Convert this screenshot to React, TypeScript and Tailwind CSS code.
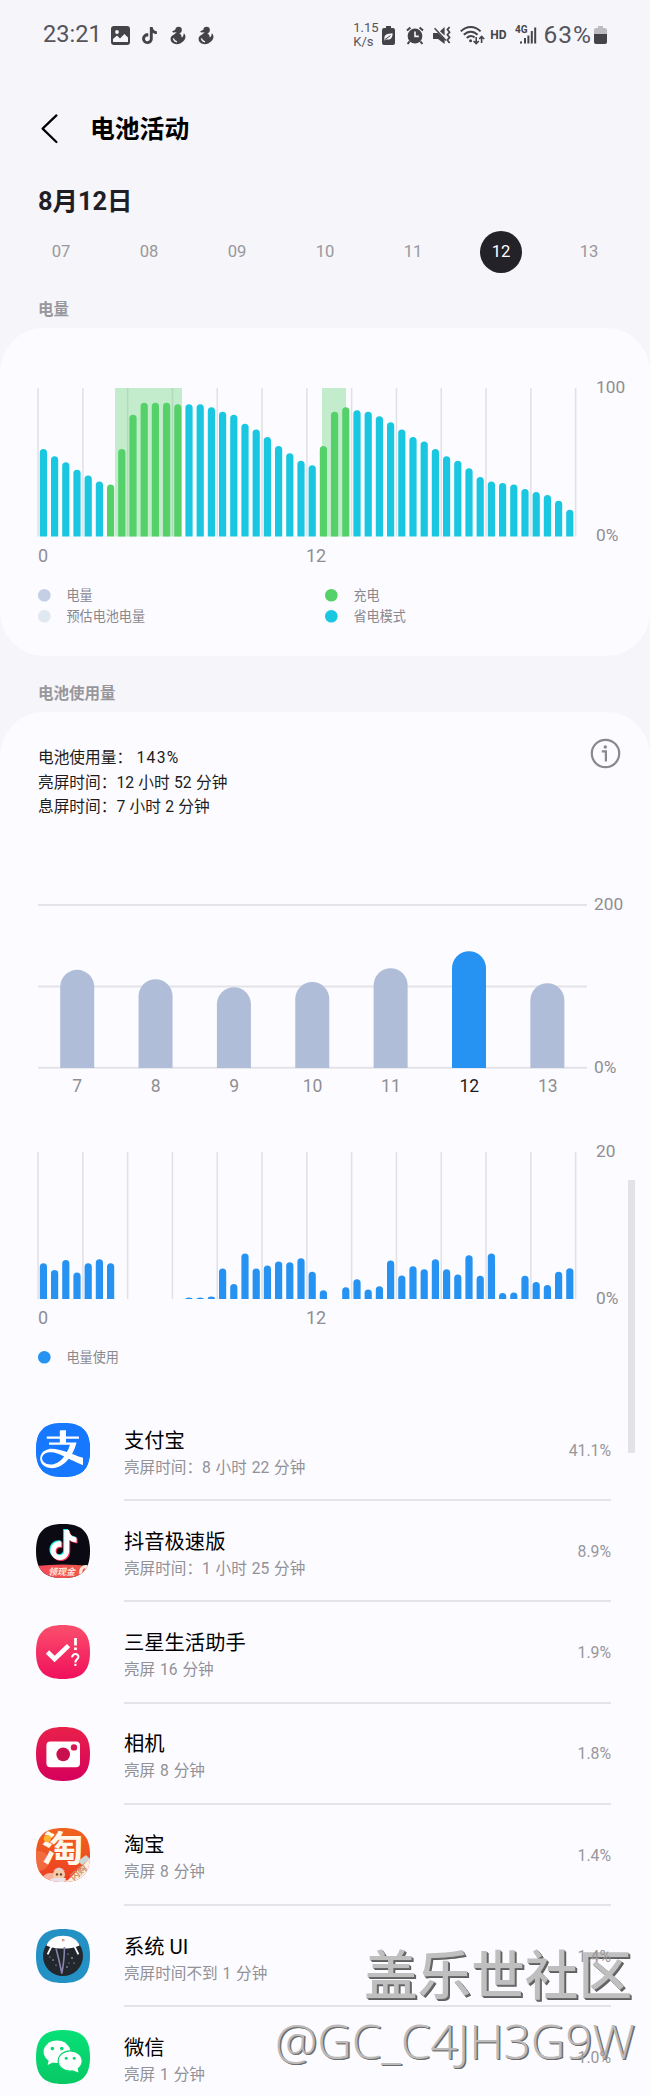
import type { ReactNode } from 'react'
import { SiAlipay, SiTiktok } from 'react-icons/si'

const CYAN = '#19c8e0'
const GREEN = '#55d169'
const BLUE = '#2693f3'

const DAYS = ['07', '08', '09', '10', '11', '12', '13']

// Battery level for every half hour of the day
const LEVELS = [
  59, 54, 50, 45, 41, 37, 35, 59, 82, 90, 90, 90, 89, 89, 89, 87, 84, 82, 76, 72, 67, 61, 56, 51,
  48, 61, 84, 87, 85, 84, 81, 77, 72, 67, 64, 59, 54, 51, 46, 40, 37, 36, 35, 32, 30, 28, 24, 18,
]

const isCharging = (i: number) => (i >= 6 && i <= 12) || (i >= 25 && i <= 27)

const USAGE = [
  4.85, 3.95, 5.3, 3.6, 4.85, 5.4, 4.85, 0, 0, 0, 0, 0, 0, 0.22, 0.22, 0.33, 4.15, 2.05, 6.2, 4.15, 4.55,
  5.1, 5, 5.55, 3.7, 1.2, 0, 1.6, 2.7, 1.3, 1.75, 5.25, 3.2, 4.45, 4.05, 5.4, 4.05, 3.35, 5.95, 3.15,
  6.2, 0.8, 0.9, 3.15, 2.3, 1.9, 3.7, 4.2,
]

const WEEK = [
  { day: '7', value: 120.5 },
  { day: '8', value: 109 },
  { day: '9', value: 99.2 },
  { day: '10', value: 105.7 },
  { day: '11', value: 122.5 },
  { day: '12', value: 143.4 },
  { day: '13', value: 104 },
]

const SQUIRCLE = 'M27 0C46 0 54 8 54 27S46 54 27 54 0 46 0 27 8 0 27 0Z'

function barPath(x: number, width: number, height: number, bottom: number) {
  const r = width / 2
  const ry = Math.min(r, height)
  const top = bottom - height
  return `M${x} ${bottom}V${top + ry}A${r} ${ry} 0 0 1 ${x + width} ${top + ry}V${bottom}Z`
}

interface DayChartProps {
  values: number[]
  max: number
  height: number
  color: (i: number) => string
  bands?: { x: number; width: number }[]
}

function DayChart({ values, max, height, color, bands = [] }: DayChartProps) {
  return (
    <svg width="540" height={height} className="block shrink-0 overflow-visible">
      {Array.from({ length: 13 }, (_, i) => (
        <rect key={i} x={i * 44.8 - 0.7} y="0" width="1.5" height={height} fill="#e0e0e5" />
      ))}
      {bands.map((b) => (
        <rect key={b.x} x={b.x} y="0" width={b.width} height={height} fill="#55d169" fillOpacity="0.34" />
      ))}
      {values.map((v, i) =>
        v > 0 ? <path key={i} d={barPath(i * 11.2 + 1.8, 7.2, (v / max) * height, height)} fill={color(i)} /> : null
      )}
    </svg>
  )
}

function AxisLabels({ top, bottom }: { top: string; bottom: string }) {
  return (
    <div className="-mt-[13px] -mb-[11px] flex flex-col justify-between text-[17.3px] leading-6 text-[#8e8e93]">
      <span>{top}</span>
      <span>{bottom}</span>
    </div>
  )
}

function HourLabels() {
  return (
    <div className="flex h-6 pl-[38px] text-[18px] leading-6 text-[#8e8e93]">
      <span className="w-[268px]">0</span>
      <span>12</span>
    </div>
  )
}

function LegendItem({ color, label }: { color: string; label: string }) {
  return (
    <div className="flex h-[21px] w-[287px] items-center">
      <svg width="13" height="13" className="mr-[15.5px]">
        <circle cx="6.3" cy="6.3" r="6.3" fill={color} />
      </svg>
      <span className="pt-px text-[13.1px] leading-5 text-[#88888d]">{label}</span>
    </div>
  )
}

function DuckIcon() {
  return (
    <svg width="16" height="19" viewBox="0 0 16 19" fill="#444347">
      <circle cx="8.6" cy="4" r="3.2" />
      <path d="M6 3.6 2.2 5.2 3 6.6 7 6.2Z" />
      <path d="M5.5 7.2C9 5.6 12 8.6 11.6 11.6 13 11 13.6 9.6 13.8 7.2 16.4 9.4 15.8 13.4 13 15.6 10.4 18.6 5 19 2.2 16.6.2 14.8 0 11.6 2 9.8 3 8.8 4.4 8.6 5.5 7.2Z" />
      <path d="M3.4 12.4C3.8 14.4 5 15.6 7 15.8" fill="none" stroke="#f6f5fa" strokeWidth="1.3" />
    </svg>
  )
}

function StatusBar() {
  return (
    <div className="flex h-[70px] items-center pl-[43px] pr-[43px] text-[#444347]">
      <span className="text-[23.6px] leading-none text-[#55545a]">23:21</span>
      <svg width="19" height="19" viewBox="0 0 19 19" className="ml-[9px]">
        <rect width="19" height="19" rx="3" fill="#444347" />
        <circle cx="6" cy="6" r="1.9" fill="#f6f5fa" />
        <path d="M2 16V13L6 9.6 9 12.4 13.4 8 17 11.4V16Z" fill="#f6f5fa" />
      </svg>
      <SiTiktok size={17} className="ml-[11px]" />
      <div className="ml-[12px] flex gap-3">
        <DuckIcon />
        <DuckIcon />
      </div>

      <div className="ml-auto flex items-center">
        <div className="w-[29px] text-[13px] leading-[14.5px] text-[#55545a]">
          <div>1.15</div>
          <div>K/s</div>
        </div>
        {/* Power saving */}
        <svg width="13" height="19" viewBox="0 0 13 19" className="mr-[11px]">
          <path d="M4 0H9V2H11Q13 2 13 4V17Q13 19 11 19H2Q0 19 0 17V4Q0 2 2 2H4Z" fill="#444347" />
          <path d="M2.4 12C2.2 8.6 5 7.6 10.6 7.2 10.6 12 8.6 14 4.6 13.4L2.2 14.6Z" fill="#f6f5fa" />
          <path d="M2.6 13.8 8.4 9.6" stroke="#444347" strokeWidth="1" />
        </svg>
        {/* Alarm */}
        <svg width="18" height="19" viewBox="0 0 18 19" className="mr-[9px]" stroke="#444347" fill="none">
          <circle cx="9" cy="10" r="7.4" fill="#444347" stroke="none" />
          <path d="M1 4.4 4.4 1.4M17 4.4 13.6 1.4M3.6 15.4 1.6 18M14.4 15.4 16.4 18" strokeWidth="2" />
          <path d="M9 5.4V10.4H12.8" stroke="#f6f5fa" strokeWidth="1.6" />
        </svg>
        {/* Vibrate */}
        <svg width="18" height="19" viewBox="0 0 18 19" className="mr-[9px]" stroke="#444347" fill="none">
          <path d="M0 7H5L11.6 13.4V18L5 13H0ZM7 5.2 11.6 1V9.6Z" fill="#444347" stroke="none" />
          <path d="M1.6 2.2 13 14.4" strokeWidth="1.5" />
          <path d="M16.6 1 14.4 3.6 16.6 6.2 14.4 8.8 16.6 11.4 14.4 14 16.6 17" strokeWidth="1.7" />
        </svg>
        {/* Wi-Fi */}
        <svg width="25" height="20" viewBox="0 0 25 20" className="mr-[5px]" stroke="#444347" fill="none">
          <path d="M.8 6.4C6.6 .4 14.8 .4 20.6 6.4M3.8 9.8C8 5.6 13.4 5.6 17.6 9.8M6.8 13C9.4 10.4 12 10.4 14.6 12.4" strokeWidth="2" />
          <circle cx="10.6" cy="15.8" r="1.5" fill="#444347" stroke="none" />
          <path d="M16.2 12V18.6M13.6 16 16.2 18.6 18.8 16M21.6 18V11.4M19.2 14 21.6 11.4 24.2 14" strokeWidth="1.6" />
        </svg>
        <span className="mr-[8px] text-[12px] font-bold leading-none">HD</span>
        <svg width="22" height="20" viewBox="0 0 22 20" className="mr-[7px]" fill="#444347">
          <text x="0" y="8.2" fontSize="10" fontWeight="700">4G</text>
          <path d="M5 16.4H7V18.6H5ZM9 13H11V18.6H9ZM12.4 10.4H14.4V18.6H12.4ZM15.8 6H17.8V18.6H15.8ZM19.2 2.4H21.2V18.6H19.2Z" />
        </svg>
        <span className="text-[24.5px] leading-none tracking-[1px] text-[#55545a]">63%</span>
        <svg width="13" height="18" viewBox="0 0 13 18" className="ml-[2px]">
          <path d="M4 0H9V2H11Q13 2 13 4V8H0V4Q0 2 2 2H4Z" fill="#bcbbc0" />
          <path d="M0 8H13V16Q13 18 11 18H2Q0 18 0 16Z" fill="#444347" />
        </svg>
      </div>
    </div>
  )
}

function AppIcon({ id, fill, children }: { id: string; fill: string; children: ReactNode }) {
  return (
    <svg width="54" height="54" viewBox="0 0 54 54" className="-mt-px block">
      <defs>
        <clipPath id={`clip-${id}`}>
          <path d={SQUIRCLE} />
        </clipPath>
        <linearGradient id="pink" x1="0" y1="0" x2="0" y2="1">
          <stop offset="0" stopColor="#fb4f6c" />
          <stop offset="1" stopColor="#f0105c" />
        </linearGradient>
        <linearGradient id="crimson" x1="0" y1="0" x2="0" y2="1">
          <stop offset="0" stopColor="#e8214a" />
          <stop offset="1" stopColor="#d6005c" />
        </linearGradient>
        <linearGradient id="orange" x1="0" y1="0" x2="0" y2="1">
          <stop offset="0" stopColor="#f0641f" />
          <stop offset="1" stopColor="#ee3c22" />
        </linearGradient>
        <linearGradient id="ribbon" x1="0" y1="0" x2="1" y2="0">
          <stop offset="0" stopColor="#f5475a" />
          <stop offset="1" stopColor="#ef5a4a" />
        </linearGradient>
        <linearGradient id="wechat" x1="0" y1="0" x2="0" y2="1">
          <stop offset="0" stopColor="#08e078" />
          <stop offset="1" stopColor="#07c964" />
        </linearGradient>
      </defs>
      <g clipPath={`url(#clip-${id})`}>
        <rect width="54" height="54" fill={fill} />
        {children}
      </g>
    </svg>
  )
}

function AlipayIcon() {
  return (
    <AppIcon id="alipay" fill="#1677ff">
      <rect x="4" y="6" width="43" height="40" fill="#fff" />
      <SiAlipay x="0" y="0" size={54} color="#1677ff" />
      <rect x="47" y="0" width="7" height="54" fill="#1677ff" />
    </AppIcon>
  )
}

function DouyinIcon() {
  return (
    <AppIcon id="douyin" fill="#0b0a12">
      <SiTiktok x="11.5" y="5" size={30} color="#25e8e2" />
      <SiTiktok x="13.5" y="7" size={30} color="#fb3159" />
      <SiTiktok x="12.5" y="6" size={30} color="#fff" />
      <path d="M0 42Q27 39 54 42V54H0Z" fill="url(#ribbon)" />
      <circle cx="50" cy="48" r="7" fill="#ffe9dc" />
      <path d="M47 51Q45 45 49 44 48 48 50 50Z" fill="#ef5a4a" />
      <text x="12" y="51" fontSize="9" fontWeight="700" fontStyle="italic" fill="#ffe9dc">领现金</text>
    </AppIcon>
  )
}

function LifeIcon() {
  return (
    <AppIcon id="life" fill="url(#pink)">
      <path d="M11.5 27 18.6 34 32.6 20.6" fill="none" stroke="#fff" strokeWidth="4.6" />
      <path d="M39.5 13V20.4M39.5 22.4V25" stroke="#fff" strokeWidth="2.8" />
      <path d="M36.2 32.4C36 28 42.6 28 42.4 32 42.2 34.4 39.4 34.4 39.4 37.4M39.4 38.8V41" fill="none" stroke="#fff" strokeWidth="2.1" />
    </AppIcon>
  )
}

function CameraIcon() {
  return (
    <AppIcon id="camera" fill="url(#crimson)">
      <rect x="10.4" y="14.6" width="33.6" height="25.6" rx="4" fill="#fff" />
      <circle cx="27.2" cy="27.4" r="6.8" fill="#c9104e" />
      <circle cx="38" cy="20.4" r="3.2" fill="#d8174f" />
    </AppIcon>
  )
}

function TaobaoIcon() {
  return (
    <AppIcon id="taobao" fill="url(#orange)">
      <circle cx="3" cy="33" r="10" fill="#f58a5c" fillOpacity=".5" />
      <text x="5.5" y="34" fontSize="36" fontWeight="700" fill="#fff7ea" textLength="42" lengthAdjust="spacingAndGlyphs">淘</text>
      <circle cx="11.4" cy="10.6" r="3.6" fill="#ffb52e" />
      <path d="M4 54Q8 42 20 46L34 54Z" fill="#f6b29c" />
      <ellipse cx="23" cy="46.4" rx="6" ry="5.4" fill="#f3cda8" />
      <path d="M17 43Q23 36 29 43 23 41 17 43Z" fill="#d9d3d8" />
      <circle cx="21" cy="46.4" r="1.2" fill="#6b3d2d" />
      <circle cx="25" cy="46.4" r="1.2" fill="#6b3d2d" />
      <path d="M12 53 17 50H30L28 54H12Z" fill="#e8e3ea" />
      <path d="M30 54 54 30V54Z" fill="#fdeee2" />
      <path d="M42 33 50 27 54 31 46 37Z" fill="#cfd6d6" />
      <text x="38" y="53" fontSize="9" fontWeight="700" fill="#d28a5e" transform="rotate(-42 38 53)">闪购</text>
    </AppIcon>
  )
}

function SystemUiIcon() {
  return (
    <AppIcon id="systemui" fill="#2491c4">
      <circle cx="27" cy="27" r="20" fill="#22262d" />
      <path d="M10.4 16.4C15 3.4 39 3.4 43.6 16.4Q36 19.6 27 19.6T10.4 16.4Z" fill="#fff" />
      <path d="M15.4 17.6 11.6 25.4M38.6 17.6 42.4 25.4" stroke="#fff" strokeWidth="1.8" />
      <path d="M20 19.4C22 27 24.4 36 25.8 44.6 27.4 36 28.6 27 28.4 18" fill="none" stroke="#8a83ad" strokeWidth="1.6" />
      <path d="M26.4 12.4V10.6H28V12.4" fill="none" stroke="#a55" strokeWidth=".7" />
      <g fill="#d5d8dd">
        <circle cx="17" cy="31" r=".7" />
        <circle cx="14" cy="28" r=".5" />
        <circle cx="20" cy="36" r=".6" />
        <circle cx="31" cy="38" r=".7" />
        <circle cx="36" cy="29" r=".8" />
        <circle cx="33" cy="34" r=".5" />
        <circle cx="38" cy="34" r=".6" />
        <circle cx="32" cy="25" r=".6" />
      </g>
    </AppIcon>
  )
}

function WechatIcon() {
  return (
    <AppIcon id="wechat" fill="url(#wechat)">
      <ellipse cx="21" cy="21.8" rx="13.4" ry="11.2" fill="#fff" />
      <path d="M13 29 11.6 35 18.6 31.6Z" fill="#fff" />
      <circle cx="16.4" cy="18.6" r="1.8" fill="#08d870" />
      <circle cx="25.8" cy="18.6" r="1.8" fill="#08d870" />
      <ellipse cx="34.2" cy="31" rx="12" ry="10.2" fill="#fff" stroke="#08d870" strokeWidth="1.2" />
      <path d="M36 40 42.4 42.4 41.4 36.6Z" fill="#fff" />
      <circle cx="30.2" cy="28.2" r="1.5" fill="#08d870" />
      <circle cx="38.2" cy="28.2" r="1.5" fill="#08d870" />
    </AppIcon>
  )
}

const APPS = [
  { name: '支付宝', detail: '亮屏时间：8 小时 22 分钟', percent: '41.1%', icon: <AlipayIcon /> },
  { name: '抖音极速版', detail: '亮屏时间：1 小时 25 分钟', percent: '8.9%', icon: <DouyinIcon /> },
  { name: '三星生活助手', detail: '亮屏 16 分钟', percent: '1.9%', icon: <LifeIcon /> },
  { name: '相机', detail: '亮屏 8 分钟', percent: '1.8%', icon: <CameraIcon /> },
  { name: '淘宝', detail: '亮屏 8 分钟', percent: '1.4%', icon: <TaobaoIcon /> },
  { name: '系统 UI', detail: '亮屏时间不到 1 分钟', percent: '1.4%', icon: <SystemUiIcon /> },
  { name: '微信', detail: '亮屏 1 分钟', percent: '1.0%', icon: <WechatIcon /> },
]

function WeekChart() {
  return (
    <div className="mt-[86px] pl-[38px]">
      <div className="flex h-[163px]">
        <svg width="549" height="164" className="mr-[7px] block shrink-0 overflow-visible">
          <path d="M0 0H549M0 81.4H549M0 162.7H549" stroke="#e3e3e8" strokeWidth="2" />
          {WEEK.map((d, i) => (
            <path
              key={d.day}
              d={barPath(i * 78.36 + 22.2, 34, (d.value / 200) * 162.7, 162.9)}
              fill={d.day === '12' ? BLUE : '#b0bdd8'}
            />
          ))}
        </svg>
        <AxisLabels top="200" bottom="0%" />
      </div>
      <div className="mt-[6px] flex h-6 w-[549px] text-center text-[17.5px] leading-6 text-[#8e8e93]">
        {WEEK.map((d) => (
          <span key={d.day} className={d.day === '12' ? 'flex-1 text-[#1c1b20]' : 'flex-1'}>
            {d.day}
          </span>
        ))}
      </div>
    </div>
  )
}

export default function App() {
  return (
    <div className="relative h-[2096px] w-[650px] overflow-hidden bg-[#f6f5fa] font-['Roboto','Noto_Sans_CJK_SC',sans-serif]">
      <StatusBar />

      {/* Header */}
      <header className="mt-[29px] flex h-[60px] items-center pl-[41px]">
        <svg width="17" height="30" viewBox="0 0 17 30" className="mr-[32px]">
          <path d="M15.4 1.4 1.6 14.6 15.4 28" fill="none" stroke="#000" strokeWidth="2.2" strokeLinecap="round" strokeLinejoin="round" />
        </svg>
        <h1 className="pt-[3px] text-[24.8px] font-semibold leading-none text-black">电池活动</h1>
      </header>

      <h2 className="mt-[22px] h-10 pl-[38px] text-[25.4px] font-bold leading-[41px] text-[#1f1e24]">8月12日</h2>

      <div className="mt-[10px] flex h-[42px] px-[17px] text-[16.6px] text-[#98989d]">
        {DAYS.map((day) => (
          <div key={day} className="flex flex-1 justify-center">
            <span
              className={
                day === '12'
                  ? 'flex size-[42px] items-center justify-center rounded-full bg-[#232228] text-white'
                  : 'flex size-[42px] items-center justify-center'
              }
            >
              {day}
            </span>
          </div>
        ))}
      </div>

      <h3 className="mt-[25px] h-6 pl-[38px] text-[15.5px] font-semibold leading-6 text-[#97979c]">电量</h3>

      {/* Battery level */}
      <section className="mt-[6px] h-[328px] rounded-[44px] bg-[#fcfbff] pt-[60px]">
        <div className="flex h-[148px] pl-[38px]">
          <DayChart
            values={LEVELS}
            max={100}
            height={148.5}
            color={(i) => (isCharging(i) ? GREEN : CYAN)}
            bands={[
              { x: 77, width: 67 },
              { x: 284, width: 24 },
            ]}
          />
          <div className="ml-[18px] flex">
            <AxisLabels top="100" bottom="0%" />
          </div>
        </div>
        <div className="mt-[8px]">
          <HourLabels />
        </div>
        <div className="mt-[17px] flex flex-wrap pl-[38px]">
          <LegendItem color="#c2cfe5" label="电量" />
          <LegendItem color={GREEN} label="充电" />
          <LegendItem color="#e0e8f1" label="预估电池电量" />
          <LegendItem color={CYAN} label="省电模式" />
        </div>
      </section>

      <h3 className="mt-[26px] h-6 pl-[38px] text-[15.5px] font-semibold leading-6 text-[#97979c]">电池使用量</h3>

      {/* Battery usage */}
      <section className="mt-[6px] h-[1400px] rounded-t-[44px] bg-[#fcfbff] pt-[25px]">
        <div className="flex h-[82px] justify-between pl-[38px] pr-[29px]">
          <div className="pt-[9px] text-[15.7px] leading-[24.7px] text-[#1c1b20] [word-spacing:0.4px]">
            <p>
              电池使用量： <span className="tracking-[1.3px]">143%</span>
            </p>
            <p>亮屏时间：12 小时 52 分钟</p>
            <p>息屏时间：7 小时 2 分钟</p>
          </div>
          <svg width="31" height="31" viewBox="0 0 31 31" className="mt-[1px]" fill="none" stroke="#88888d">
            <circle cx="15.5" cy="15.5" r="13.7" strokeWidth="2.2" />
            <circle cx="15.3" cy="9" r="1.7" fill="#88888d" stroke="none" />
            <path d="M11.8 13.4H15.9V23.6" strokeWidth="2.2" />
          </svg>
        </div>

        <WeekChart />

        <div className="mt-[54px] flex h-[147px] pl-[38px]">
          <DayChart values={USAGE} max={20} height={147} color={() => BLUE} />
          <div className="ml-[18px] flex">
            <AxisLabels top="20" bottom="0%" />
          </div>
        </div>
        <div className="mt-[7px]">
          <HourLabels />
        </div>
        <div className="mt-[17px] pl-[38px]">
          <LegendItem color={BLUE} label="电量使用" />
        </div>

        <ul className="mt-[32px] pl-[36px] pr-[39px]">
          {APPS.map((app) => (
            <li key={app.name} className="flex h-[101.2px] items-center">
              {app.icon}
              <div className="ml-[34px] flex h-full flex-1 items-center justify-between border-b-2 border-[#e3e3e8]">
                <div className="pt-[8px]">
                  <p className="text-[20.3px] leading-[28px] text-black">{app.name}</p>
                  <p className="text-[15.6px] leading-[26px] text-[#919196] [word-spacing:1px]">{app.detail}</p>
                </div>
                <span className="z-10 pt-[2px] text-[15.8px] text-[#97979c]">{app.percent}</span>
              </div>
            </li>
          ))}
        </ul>
      </section>

      {/* Scroll thumb */}
      <div className="absolute left-[628px] top-[1180px] h-[273px] w-[6.5px] bg-[#e3e2e7]" />

      {/* Watermark */}
      <div className="absolute right-[18px] top-[1945px] whitespace-nowrap text-[53.6px] font-medium leading-[64px] text-[#bfbfbf] [text-shadow:1px_1px_0_#6a6a6a,2px_2px_0_#5f5f5f]">
        盖乐世社区
      </div>
      <div className="absolute left-[275px] top-[2009px] whitespace-nowrap font-['Open_Sans',sans-serif] text-[47.8px] font-light leading-[64px] tracking-[-0.1px] text-[#bdbaba] [text-shadow:1px_1px_0_#6c6c6c,1.5px_1px_0_#777]">
        @GC_C4JH3G9W
      </div>
    </div>
  )
}
